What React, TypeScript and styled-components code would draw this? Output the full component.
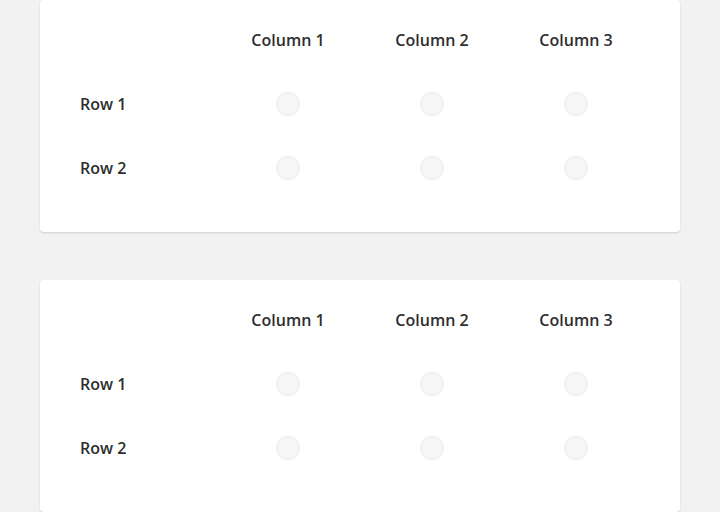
import React from "react";
import styled, { createGlobalStyle } from "styled-components";

const GlobalStyle = createGlobalStyle`
  html, body {
    margin: 0;
    padding: 0;
    background: #f2f2f2;
    font-family: "Open Sans", "Noto Sans", sans-serif;
  }
`;

const Page = styled.div`
  display: flex;
  flex-direction: column;
  align-items: center;
  gap: 48px;
  padding-bottom: 40px;
`;

const Card = styled.section`
  width: 640px;
  box-sizing: border-box;
  background: #ffffff;
  border-radius: 4px;
  box-shadow: 0 1px 2px rgba(0, 0, 0, 0.14);
  padding: 8px 32px 32px 40px;
`;

const Grid = styled.div`
  display: grid;
  grid-template-columns: 136px repeat(3, 144px);
  grid-auto-rows: 64px;
  align-items: center;
`;

const Head = styled.div`
  text-align: center;
  font-size: 16px;
  font-weight: 600;
  color: #2e2e2e;
`;

const Label = styled.div`
  font-size: 16px;
  font-weight: 600;
  color: #2e2e2e;
`;

const Cell = styled.div`
  display: flex;
  justify-content: center;
  align-items: center;
`;

const Radio = styled.span`
  width: 24px;
  height: 24px;
  box-sizing: border-box;
  border-radius: 50%;
  background: #f6f6f6;
  border: 1px solid #ebebeb;
`;

const columns = ["Column 1", "Column 2", "Column 3"];
const rows = ["Row 1", "Row 2"];

const Matrix = () => (
  <Card>
    <Grid>
      <div />
      {columns.map((c) => (
        <Head key={c}>{c}</Head>
      ))}
      {rows.map((r) => (
        <React.Fragment key={r}>
          <Label>{r}</Label>
          {columns.map((c) => (
            <Cell key={c}>
              <Radio />
            </Cell>
          ))}
        </React.Fragment>
      ))}
    </Grid>
  </Card>
);

const App = () => (
  <>
    <GlobalStyle />
    <Page>
      <Matrix />
      <Matrix />
    </Page>
  </>
);

export default App;
